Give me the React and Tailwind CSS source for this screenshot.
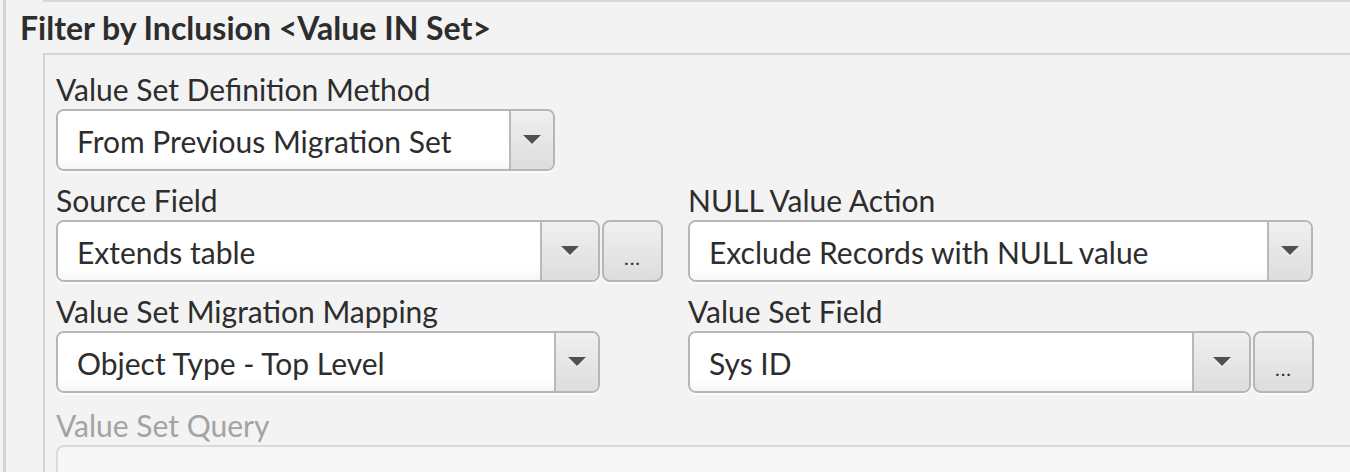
import React from "react";

const Arrow = () => (
  <svg width="20" height="12" viewBox="0 0 20 12">
    <path d="M1 2 L19 2 L10 11 Z" fill="#ffffff" />
    <path d="M1 1 L19 1 L10 10 Z" fill="#505050" />
  </svg>
);

const Combo = ({ value, width, arrowW }) => (
  <div
    className="h-[62px] shrink-0 flex rounded-[8px] border-2 border-[#b6b6b6] bg-white overflow-hidden shadow-[0_2px_0_#fbfbfb]"
    style={{ width }}
  >
    <div className="flex-1 flex items-center pl-[19px] pt-[3px] bg-gradient-to-b from-white from-80% to-[#f6f6f6] text-[#2d2d2d]">
      {value}
    </div>
    <div
      className="flex items-center justify-center border-l-2 border-[#b9b9b9] bg-gradient-to-b from-[#f0f0f0] to-[#dddddd]"
      style={{ width: arrowW }}
    >
      <Arrow />
    </div>
  </div>
);

const DotsButton = () => (
  <div className="w-[61px] h-[62px] shrink-0 ml-[2px] rounded-[8px] border-2 border-[#b6b6b6] bg-gradient-to-b from-[#f0f0f0] to-[#dddddd] flex items-center justify-center pt-[12px] text-[20px] tracking-[1px] text-[#333] shadow-[0_2px_0_#fbfbfb]">
    ...
  </div>
);

const Label = ({ children, dim }) => (
  <div className={"h-[34px] mb-[3px] flex items-center " + (dim ? "text-[#a3a3a3]" : "text-[#2d2d2d]")}>
    {children}
  </div>
);

export default function App() {
  return (
    <div className="w-[1350px] h-[472px] bg-[#f3f3f3] overflow-hidden font-['Lato',sans-serif] text-[30px]">
      <div className="ml-[3px] h-full border-l-[3px] border-[#d2d2d2] flex flex-col">
        {/* top edge of previous panel */}
        <div className="ml-[37px] h-[2px] shrink-0 bg-[#d8d8d8]" />

        <div className="h-[51px] shrink-0 flex items-center pl-[14px] font-bold text-[32px] text-[#2d2d2d]">
          Filter by Inclusion &lt;Value IN Set&gt;
        </div>

        <div className="ml-[37px] flex-1 min-h-0 border-l-2 border-t-2 border-[#d6d6d6] pl-[11px] pt-[17px]">
          <Label>Value Set Definition Method</Label>
          <Combo value="From Previous Migration Set" width={499} arrowW={44} />

          <div className="flex mt-[12px]">
            <div className="w-[632px]">
              <Label>Source Field</Label>
              <div className="flex">
                <Combo value="Extends table" width={544} arrowW={58} />
                <DotsButton />
              </div>
            </div>
            <div>
              <Label>NULL Value Action</Label>
              <Combo value="Exclude Records with NULL value" width={625} arrowW={44} />
            </div>
          </div>

          <div className="flex mt-[12px]">
            <div className="w-[632px]">
              <Label>Value Set Migration Mapping</Label>
              <Combo value="Object Type - Top Level" width={544} arrowW={44} />
            </div>
            <div>
              <Label>Value Set Field</Label>
              <div className="flex">
                <Combo value="Sys ID" width={563} arrowW={57} />
                <DotsButton />
              </div>
            </div>
          </div>

          <div className="mt-[15px]">
            <Label dim>Value Set Query</Label>
            <div className="h-[40px] -mr-[20px] rounded-tl-[8px] border-l-2 border-t-2 border-[#dadada] bg-[#f7f7f7]" />
          </div>
        </div>
      </div>
    </div>
  );
}
